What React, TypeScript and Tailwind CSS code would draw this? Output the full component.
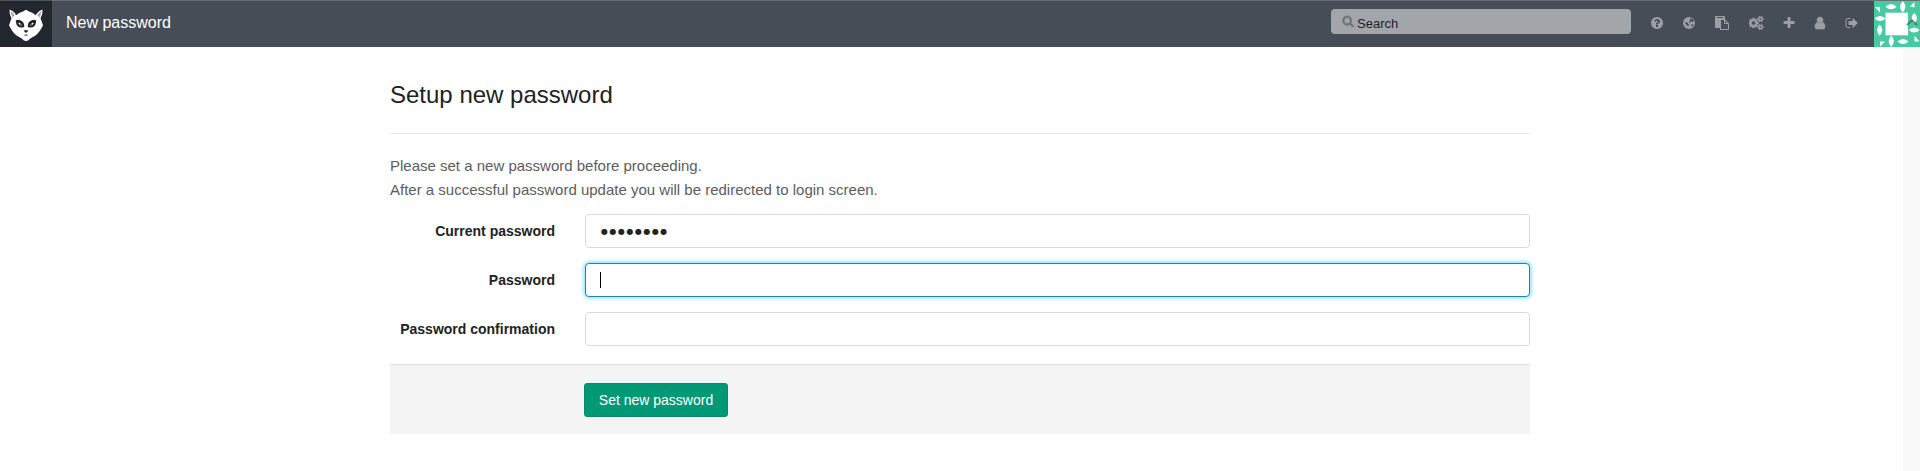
import React from "react";

const ICONS = {
  search:
    "M1216 832q0-185-131.5-316.5t-316.5-131.5-316.5 131.5-131.5 316.5 131.5 316.5 316.5 131.5 316.5-131.5 131.5-316.5zm512 832q0 52-38 90t-90 38q-54 0-90-38l-343-342q-179 124-399 124-143 0-273.5-55.5t-225-150-150-225-55.5-273.5 55.5-273.5 150-225 225-150 273.5-55.5 273.5 55.5 225 150 150 225 55.5 273.5q0 220-124 399l343 343q37 37 37 90z",
  help: "M1024 1376v-192q0-14-9-23t-23-9h-192q-14 0-23 9t-9 23v192q0 14 9 23t23 9h192q14 0 23-9t9-23zm256-672q0-88-55.5-163t-138.5-116-170-41q-243 0-371 213-15 24 8 42l132 100q7 6 19 6 16 0 25-12 53-68 86-92 34-24 86-24 48 0 85.5 26t37.5 59q0 38-20 61t-68 45q-63 28-115.5 86.5t-52.5 125.5v36q0 14 9 23t23 9h192q14 0 23-9t9-23q0-19 21.5-49.5t54.5-49.5q32-18 49-28.5t46-35 44.5-48 28-60.5 12.5-81zm384 192q0 209-103 385.5t-279.5 279.5-385.5 103-385.5-103-279.5-279.5-103-385.5 103-385.5 279.5-279.5 385.5-103 385.5 103 279.5 279.5 103 385.5z",
  globe:
    "M896 128a768 768 0 1 0 0 1536a768 768 0 1 0 0-1536zM1000 250l230 60 210 170 90 200-150 90-120-90-120 60-60 110-110-40-60-130 150-130 30-140zM420 760l170 40 180 130 130 170-60 160-110 30-150-170-130-170zM1230 1080l190-60 60 80-130 220-150 50z",
  paste:
    "M768 1664h896v-640h-416q-40 0-68-28t-28-68v-416h-384v1152zm256-1440v-64q0-13-9.5-22.5t-22.5-9.5h-704q-13 0-22.5 9.5t-9.5 22.5v64q0 13 9.5 22.5t22.5 9.5h704q13 0 22.5-9.5t9.5-22.5zm256 672h299l-299-299v299zm512 128v672q0 40-28 68t-68 28h-960q-40 0-68-28t-28-68v-160h-544q-40 0-68-28t-28-68v-1344q0-40 28-68t68-28h1088q40 0 68 28t28 68v328q21 13 36 28l408 408q28 28 48 76t20 88z",
  cogs: "M832 896q0-106-75-181t-181-75-181 75-75 181 75 181 181 75 181-75 75-181zm768 512q0-52-38-90t-90-38-90 38-38 90q0 53 37.5 90.5t90.5 37.5 90.5-37.5 37.5-90.5zm0-1024q0-52-38-90t-90-38-90 38-38 90q0 53 37.5 90.5t90.5 37.5 90.5-37.5 37.5-90.5zm-384 421v185q0 10-7 19.5t-16 10.5l-155 24q-11 35-32 76 34 48 90 115 7 11 7 20 0 12-7 19-23 30-82.5 89.5t-78.5 59.5q-11 0-21-7l-115-90q-37 19-77 31-11 108-23 155-7 24-30 24h-186q-11 0-20-7.5t-10-17.5l-23-153q-34-10-75-31l-118 89q-7 7-20 7-11 0-21-8-144-133-144-160 0-9 7-19 10-14 41-53t47-61q-23-44-35-82l-152-24q-10-1-17-9.5t-7-19.5v-185q0-10 7-19.5t16-10.5l155-24q11-35 32-76-34-48-90-115-7-11-7-20 0-12 7-20 22-30 82-89t79-59q11 0 21 7l115 90q34-18 77-32 11-108 23-154 7-24 30-24h186q11 0 20 7.5t10 17.5l23 153q34 10 75 31l118-89q8-7 20-7 11 0 21 8 144 133 144 160 0 8-7 19-12 16-42 54t-45 60q23 48 34 82l152 23q10 2 17 10.5t7 19.5zm640 533v140q0 16-149 31-12 27-30 52 51 113 51 138 0 4-4 7-122 71-124 71-8 0-46-47t-52-68q-20 2-30 2t-30-2q-14 21-52 68t-46 47q-2 0-124-71-4-3-4-7 0-25 51-138-18-25-30-52-149-15-149-31v-140q0-16 149-31 13-29 30-52-51-113-51-138 0-4 4-7 4-2 35-20t59-34 30-16q8 0 46 46.5t52 67.5q20-2 30-2t30 2q51-71 92-112l6-2q4 0 124 70 4 3 4 7 0 25-51 138 17 23 30 52 149 15 149 31zm0-1024v140q0 16-149 31-12 27-30 52 51 113 51 138 0 4-4 7-122 71-124 71-8 0-46-47t-52-68q-20 2-30 2t-30-2q-14 21-52 68t-46 47q-2 0-124-71-4-3-4-7 0-25 51-138-18-25-30-52-149-15-149-31v-140q0-16 149-31 13-29 30-52-51-113-51-138 0-4 4-7 4-2 35-20t59-34 30-16q8 0 46 46.5t52 67.5q20-2 30-2t30 2q51-71 92-112l6-2q4 0 124 70 4 3 4 7 0 25-51 138 17 23 30 52 149 15 149 31z",
  plus: "M1600 736v192q0 40-28 68t-68 28h-416v416q0 40-28 68t-68 28h-192q-40 0-68-28t-28-68v-416h-416q-40 0-68-28t-28-68v-192q0-40 28-68t68-28h416v-416q0-40 28-68t68-28h192q40 0 68 28t28 68v416h416q40 0 68 28t28 68z",
  user: "M1536 1399q0 109-62.5 187t-150.5 78h-854q-88 0-150.5-78t-62.5-187q0-85 8.5-160.5t31.5-152 58.5-131 94-89 134.5-34.5q131 128 313 128t313-128q76 0 134.5 34.5t94 89 58.5 131 31.5 152 8.5 160.5zm-256-887q0 159-112.5 271.5t-271.5 112.5-271.5-112.5-112.5-271.5 112.5-271.5 271.5-112.5 271.5 112.5 112.5 271.5z",
  signOut:
    "M704 1440q0 4 1 20t.5 26.5-3 23.5-10 19.5-20.5 6.5h-320q-119 0-203.5-84.5t-84.5-203.5v-704q0-119 84.5-203.5t203.5-84.5h320q13 0 22.5 9.5t9.5 22.5q0 4 1 20t.5 26.5-3 23.5-10 19.5-20.5 6.5h-320q-66 0-113 47t-47 113v704q0 66 47 113t113 47h312l11.5 1 11.5 3 8 5.5 7 9 2 13.5zm928-544q0 26-19 45l-544 544q-19 19-45 19t-45-19-19-45v-288h-448q-26 0-45-19t-19-45v-384q0-26 19-45t45-19h448v-288q0-26 19-45t45-19 45 19l544 544q19 19 19 45z",
};

function Icon({ name, className, box = "0 0 1792 1792" }: { name: keyof typeof ICONS; className: string; box?: string }) {
  return (
    <svg viewBox={box} className={className} fill="currentColor" fillRule={name === "globe" ? "evenodd" : "nonzero"} aria-hidden="true">
      <path d={ICONS[name]} />
    </svg>
  );
}

function Logo() {
  return (
    <svg viewBox="0 0 52 47" className="h-[47px] w-[52px]" aria-hidden="true">
      <path fill="#fff" d="M9.500 8.500Q13 9.500 15 12.200L16 14.200Q20 11 23 10.500L26 8.800L29 10.500Q32 11 36 14.200L37 12.200Q39 9.500 42.500 8.500Q43 13 40.500 17.200L43 24.300Q40 31 35.500 34.500Q29.500 37.500 28.500 39.300Q26 40.500 23.500 39.300Q22.500 37.500 16.500 34.500Q12 31 9 24.300L11.500 17.200Q9 13 9.500 8.500Z" />
      <path d="M10.700 10.300Q13 11.500 14.700 14.200L12.500 16.500Q10.900 13.500 10.700 10.300ZM41.300 10.300Q39 11.500 37.300 14.200L39.500 16.500Q41.100 13.500 41.300 10.300Z" fill="#a5a7aa" />
      <path d="M15.700 19.500Q19 17.500 22 20.200Q24.500 22 24.200 26Q18.500 27.800 16.500 23.500ZM36.300 19.500Q33 17.500 30 20.200Q27.500 22 27.800 26Q33.500 27.800 35.500 23.500Z" fill="#202328" />
      <path d="M18.200 22Q21 21 22 24.300Q19.500 24.800 18.200 22ZM33.800 22Q31 21 30 24.300Q32.500 24.800 33.800 22Z" fill="#fff" />
      <circle cx="20.800" cy="23.100" r=".8" fill="#202328" />
      <circle cx="31.200" cy="23.100" r=".8" fill="#202328" />
      <path d="M23.700 29.200H28.300L27 31.400H25ZM23.500 34L26 33.500L28.500 34L26 34.800Z" fill="#202328" />
    </svg>
  );
}

function Avatar() {
  return (
    <svg viewBox="0 0 46 46" className="h-[46px] w-[46px] shrink-0" aria-hidden="true">
      <rect width="46" height="46" fill="#47c9a2" />
      <rect x="11.500" y="11.700" width="22.500" height="22.600" fill="#fff" />
      <g fill="#fff">
        <path d="M1 6H6V11.500ZM36 5.500L40.500 1V6.500ZM6 40.500H11L6 45.500ZM40.500 35L45.500 40.500H40.500Z" />
        <path d="M11.500 5.700Q17 .500 22.700 5.700Q17 10.900 11.500 5.700ZM23.500 40.500Q29 35.300 34.500 40.500Q29 45.700 23.500 40.500ZM.500 17.500Q6 12.300 11.500 17.500Q6 22.700 .500 17.500ZM34.700 29Q40.200 23.800 45.700 29Q40.200 34.200 34.700 29Z" />
        <path d="M28.700 0Q34 5.700 28.700 11.500Q23.500 5.700 28.700 0ZM17.300 34.500Q22.500 40 17.300 46Q12 40 17.300 34.500ZM5.700 23.500Q11 29 5.700 34.700Q.500 29 5.700 23.500ZM40.300 11.700Q45.500 17.300 40.300 23Q35 17.300 40.300 11.700Z" />
      </g>
      <path d="M33 24L38 19.300L43 24" fill="none" stroke="#4f625d" strokeOpacity=".75" strokeWidth="2" />
    </svg>
  );
}

function Field({ label, children, focused = false }: { label: string; children?: React.ReactNode; focused?: boolean }) {
  return (
    <div className="flex items-center">
      <div className="w-[165px] text-right text-sm font-bold text-[#222]">{label}</div>
      <div
        className={
          focused
            ? "ml-[30px] flex h-[34px] flex-1 items-center rounded border border-[#2385a8] bg-white pl-3.5 shadow-[0_0_4px_1px_#6fdcff]"
            : "ml-[30px] flex h-[34px] flex-1 items-center rounded border border-[#dadada] bg-white pl-3.5"
        }
      >
        {children}
      </div>
    </div>
  );
}

export default function App() {
  return (
    <div className="flex h-[471px] w-[1920px] flex-col overflow-hidden bg-white font-['Liberation_Sans',Arial,sans-serif]">
      <header className="flex h-[47px] shrink-0 border-t border-[#6a6e76] bg-[#474d57]">
        <div className="-mt-px flex h-[47px] w-[52px] items-center justify-center border-t border-[#50545a] bg-[#22262e]">
          <Logo />
        </div>
        <div className="ml-3.5 flex-1 pt-[10px] text-base leading-6 text-white">New password</div>
        <div className="mt-2 flex h-[25px] w-[300px] rounded-sm bg-[#a2a5a9] pl-[11px] text-[#1f2226]">
          <Icon name="search" className="mt-1.5 h-[12px] w-[12px] stroke-current stroke-[80] text-[#6f737a]" />
          <span className="ml-[3px] pt-[6px] text-[13px] leading-[18px]">Search</span>
        </div>
        <nav className="flex text-[#9a9fa8]">
          <Icon name="help" className="ml-[19px] mt-[15px] h-[14px] w-[14px]" />
          <Icon name="globe" className="ml-[18px] mt-[15px] h-[14px] w-[14px]" />
          <Icon name="paste" className="ml-[19px] mt-[15px] h-[14px] w-[14px]" />
          <Icon name="cogs" box="0 0 1920 1792" className="ml-5 mt-[15px] h-[14px] w-[15px] stroke-current stroke-[60]" />
          <Icon name="plus" className="ml-[18px] mt-[15px] h-[14px] w-[14px]" />
          <Icon name="user" className="ml-[17px] mt-[15px] h-[14px] w-[14px] stroke-current stroke-[80]" />
          <Icon name="signOut" className="ml-[18px] mt-[15px] h-[14px] w-[14px]" />
        </nav>
        <div className="ml-[15px] flex">
          <Avatar />
        </div>
      </header>

      <div className="flex flex-1">
        <div className="w-[390px]" />
        <main className="w-[1140px]">
          <h1 className="mt-[33px] text-2xl leading-[30px] text-[#222]">Setup new password</h1>
          <div className="mt-[23px] border-t border-[#e8e8e8]" />
          <p className="mt-5 text-[15px] leading-6 text-[#5c5d5e]">
            Please set a new password before proceeding.
            <br />
            After a successful password update you will be redirected to login screen.
          </p>
          <div className="mt-3 flex flex-col gap-[15px]">
            <Field label="Current password">
              <span className="ml-px mt-0.5 font-['DejaVu_Sans',sans-serif] text-[8px] leading-none tracking-[1.5px] text-[#222]">●●●●●●●●</span>
            </Field>
            <Field label="Password" focused>
              <span className="h-4 w-px bg-black" />
            </Field>
            <Field label="Password confirmation" />
          </div>
          <div className="mt-[18px] flex h-[70px] items-center border-t border-[#e1e1e1] bg-[#f4f4f4] pl-[194px]">
            <button className="h-[34px] w-36 rounded-[3px] border border-[#0a8a67] bg-[#019875] text-sm text-white">Set new password</button>
          </div>
        </main>
        <aside className="ml-auto w-[17px] bg-[#f9f9f9]" />
      </div>
    </div>
  );
}
